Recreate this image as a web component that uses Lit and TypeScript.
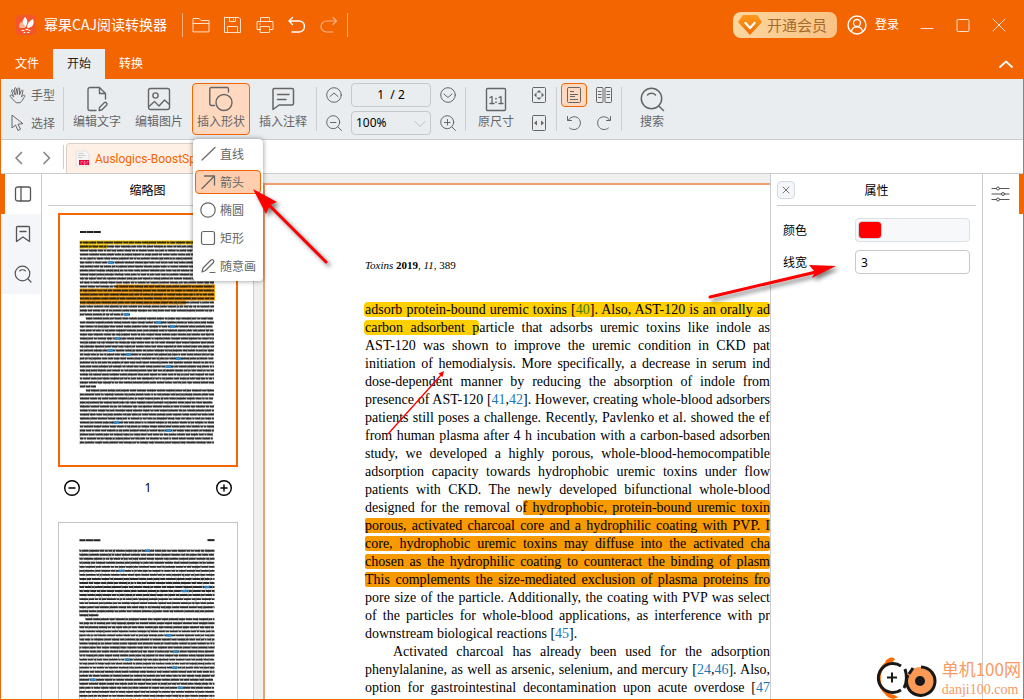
import { LitElement, html, css, svg, nothing, TemplateResult, SVGTemplateResult } from "lit";
import { customElement, property } from "lit/decorators.js";
import { classMap } from "lit/directives/class-map.js";

/* ---------- icons, drawn on the pixel grid of their own size ---------- */

const icon = (w: number, h: number, body: SVGTemplateResult) =>
  html`<svg width=${w} height=${h} viewBox="0 0 ${w} ${h}" fill="none" stroke="currentColor" stroke-linecap="round" stroke-linejoin="round" aria-hidden="true">${body}</svg>`;

const icons = {
  logo: icon(20, 20, svg`<rect width="20" height="20" rx="4" fill="#f4562b" stroke="none"/>
    <path d="M9 2 C12 5 12 8 9.500 12 C6 11 5 7 9 2 Z" fill="#fff" stroke="none"/>
    <path d="M17 4 C19 9 16 13 11 13 C11 9 13 6 17 4 Z" fill="#fff" stroke="none"/>
    <path d="M5 7 C3 9 2.500 12 4 13 H9 C9 10 7 8 5 7 Z" fill="#ffb896" stroke="none"/>
    <path d="M6 15.500 h2 M10 14.500 h2 M13 15.500 h1 M8 17.500 h1 M11.500 17.500 h1.500" stroke="#fff"/>`),
  open: icon(20, 20, svg`<path d="M2 16.500 V3.500 H8 L10 5.500 H18 V16.500 Z M2 8.500 H18"/>`),
  save: icon(20, 20, svg`<path d="M2.500 2.500 H16 L17.500 4 V17.500 H1.500 V2.500 Z M6.500 2.500 V6.500 H12.500 V2.500 M10.500 4 V5 M4.500 17.500 V11.500 H14.500 V17.500"/>`),
  print: icon(20, 20, svg`<path d="M5.500 6.500 V2.500 H14.500 V6.500 M5.500 14.500 H2 V6.500 H18 V14.500 H14.500 M5.500 11.500 H14.500 V17.500 H5.500 Z M4.500 9 H5.500"/>`),
  undo: icon(20, 20, svg`<path d="M5.500 2.500 L2 6 L5.500 9.500 M2.500 6 H12 A5.500 5.500 0 0 1 12 17 H5" stroke-width="1.400"/>`),
  redo: icon(20, 20, svg`<path d="M14 2.500 L17.500 6 L14 9.500 M17 6 H7.500 A5.500 5.500 0 0 0 7.500 17 H14" stroke-width="1.200"/>`),
  gem: icon(24, 20, svg`<defs><linearGradient id="g" x1="0" y1="0" x2="0" y2="1"><stop offset="0" stop-color="#ff9a1a"/><stop offset="1" stop-color="#f46a00"/></linearGradient></defs>
    <path d="M5 0 H19 L24 7 L12 20 L0 7 Z" fill="url(#g)" stroke="none"/><path d="M7.500 8 L12 13 L16.500 8" stroke="#fff" stroke-width="2.400"/>`),
  user: icon(20, 20, svg`<circle cx="10" cy="10" r="9" stroke-width="1.400"/><circle cx="10" cy="8" r="3.500" stroke-width="1.300"/><path d="M4.500 16.500 C5 13 7.500 11.800 10 11.800 C12.500 11.800 15 13 15.500 16.500" stroke-width="1.300"/>`),
  min: icon(14, 14, svg`<path d="M1 10.500 H13"/>`),
  max: icon(14, 14, svg`<rect x="1" y="1.500" width="12" height="12" rx="1"/>`),
  close: icon(14, 14, svg`<path d="M1 1 L13 13 M13 1 L1 13"/>`),
  chevUp: icon(14, 8, svg`<path d="M1 7 L7 1.500 L13 7" stroke-width="1.700"/>`),
  hand: icon(18, 18, svg`<path d="M7 16.500 C4.500 14.500 3 12.500 1.300 10.300 C0.700 9.200 2 8.400 3 9.300 L4.800 11 L2.600 5 C2.300 3.800 3.800 3.200 4.300 4.400 L6.300 9 L5.600 2.800 C5.500 1.500 7.200 1.300 7.400 2.600 L8.300 8.500 L9 2.600 C9.200 1.400 10.800 1.600 10.700 2.900 L10.500 8.800 L12.300 4.600 C12.900 3.500 14.200 4.100 13.900 5.200 L12.600 10.800 C13.500 10 14.500 9 15.300 9.200 C16.200 9.600 15.800 10.500 15.200 11.300 C13.800 13.300 13 15.500 11.500 16.500 Z"/>`),
  cursor: icon(18, 18, svg`<path d="M3 1.500 V14 L6.500 11 L9 16.500 L11.500 15.300 L9 10.200 L13.500 9.700 Z"/>`),
  editText: icon(24, 26, svg`<path d="M11 24.500 H5 A2 2 0 0 1 3 22.500 V3.500 A2 2 0 0 1 5 1.500 H14.500 L20.500 7.500 V13 M14.500 1.500 V7.500 H20.500 M14.500 21.500 L19.500 16.500 C20.500 15.600 22.800 17.500 21.800 19 L17 23.800 L14.200 24.500 Z" stroke-width="1.400"/>`),
  editImage: icon(24, 26, svg`<rect x="1.500" y="2.500" width="21" height="21" rx="2" stroke-width="1.400"/><circle cx="8.500" cy="9.500" r="2.600" stroke-width="1.400"/><path d="M2 20.500 L7.500 15.500 L12 20 L17.500 14 L22.500 18.500" stroke-width="1.400"/>`),
  shapes: icon(24, 26, svg`<path d="M5.500 19.500 H2.500 A2 2 0 0 1 0.800 18 V3 A1.500 1.500 0 0 1 2.500 1.500 H18 A1.500 1.500 0 0 1 19.500 3 V6" stroke-width="1.400"/><circle cx="15" cy="16.500" r="8" stroke-width="1.400"/>`),
  note: icon(24, 26, svg`<path d="M3 2.500 H21 A1.500 1.500 0 0 1 22.500 4 V17.500 A1.500 1.500 0 0 1 21 19 H8 L2 23.500 V4 A1.500 1.500 0 0 1 3 2.500 Z M6.500 8.500 H18 M6.500 13.500 H15" stroke-width="1.500"/>`),
  up: icon(16, 16, svg`<circle cx="8" cy="8" r="7.300"/><path d="M4 9.500 L8 6 L12 9.500"/>`),
  down: icon(16, 16, svg`<circle cx="8" cy="8" r="7.300"/><path d="M4 7 L8 10.500 L12 7"/>`),
  zoomOut: icon(16, 16, svg`<circle cx="7.200" cy="7.200" r="6.500"/><path d="M4.500 7.500 H10 M12 12 L15.500 15.500"/>`),
  zoomIn: icon(16, 16, svg`<circle cx="7.200" cy="7.200" r="6.500"/><path d="M4.500 7.500 H10 M7.500 4.500 V10 M12 12 L15.500 15.500"/>`),
  ratio: icon(22, 26, svg`<rect x="1.500" y="2.500" width="19" height="22" rx="1" stroke-width="1.400"/><path d="M5 11.500 L7 10.500 V17 M5 17.500 H9 M14 11.500 L16 10.500 V17 M14 17.500 H18" stroke-width="1.300"/><path d="M11 12.500 V13 M11 16 V16.500" stroke-width="1.500"/>`),
  fitPage: icon(16, 16, svg`<rect x="1.500" y="0.500" width="13" height="15" rx="1"/><g fill="currentColor" stroke="none"><path d="M8 3 L10.500 5.500 H5.500 Z"/><path d="M8 13 L10.500 10.500 H5.500 Z"/><path d="M3 8 L5.500 5.500 V10.500 Z"/><path d="M13 8 L10.500 5.500 V10.500 Z"/></g>`),
  fitWidth: icon(16, 16, svg`<rect x="1.500" y="0.500" width="13" height="15" rx="1"/><g fill="currentColor" stroke="none"><path d="M3 8 L6 5.500 V10.500 Z"/><path d="M13 8 L10 5.500 V10.500 Z"/></g>`),
  single: icon(16, 16, svg`<rect x="1.500" y="0.500" width="13" height="15" rx="1"/><path d="M4 4.500 H8 M4 7.500 H12 M4 9.500 H9 M4 12.500 H12" stroke-linecap="butt"/>`),
  double: icon(18, 16, svg`<rect x="1.500" y="0.500" width="6.500" height="15" rx="1"/><rect x="10" y="0.500" width="6.500" height="15" rx="1"/><path d="M3 4.500 H6.500 M3 7.500 H6.500 M3 10.500 H6.500 M11.500 4.500 H15 M11.500 7.500 H15 M11.500 10.500 H15" stroke-linecap="butt"/>`),
  rotL: icon(16, 16, svg`<path d="M1.500 1.500 V5.500 H5.500 M2 5.500 C5 0.500 11 0.800 13.500 4.500 C16 9 13 14.500 8 14.500 C6 14.500 4.500 14 3.500 13"/>`),
  rotR: icon(16, 16, svg`<path d="M14.500 1.500 V5.500 H10.500 M14 5.500 C11 0.500 5 0.800 2.500 4.500 C0 9 3 14.500 8 14.500 C10 14.500 11.500 14 12.500 13"/>`),
  search: icon(26, 26, svg`<circle cx="12.500" cy="12.500" r="10.200" stroke-width="1.500"/><path d="M19.800 20 L24.500 24.500 M8.500 9 C10.500 6.800 14.500 6.800 16.500 9" stroke-width="1.500"/>`),
  back: icon(10, 14, svg`<path d="M7.500 1.500 L2 7 L7.500 12.500" stroke-width="1.700"/>`),
  fwd: icon(10, 14, svg`<path d="M2 1.500 L7.500 7 L2 12.500" stroke-width="1.700"/>`),
  pdf: icon(16, 18, svg`<path d="M1.500 1 H11 L14 4 V16 H1.500 Z" fill="#f4f4f4" stroke="#e2e2e2"/><path d="M3.500 3.500 H8 M3.500 5.500 H10 M3.500 7.500 H7" stroke="#d0d0d0"/><rect x="4" y="10" width="10" height="5" fill="#e8003c" stroke="none"/><path d="M6 14 V11.500 H7.500 M9 14 V11.500 H10 V14 Z M12 14 V11.500 H13" stroke="#ffb0c0" stroke-width=".6"/>`),
  panel: icon(18, 18, svg`<rect x="1.500" y="2" width="15" height="14" rx="2" stroke-width="1.300"/><path d="M7 2 V16" stroke-width="1.300"/>`),
  bookmark: icon(18, 18, svg`<path d="M2.500 16.500 V2.500 A1 1 0 0 1 3.500 1.500 H14.500 A1 1 0 0 1 15.500 2.500 V16.500 L9 12 Z M6 6.500 H12" stroke-width="1.300"/>`),
  find: icon(18, 18, svg`<circle cx="8.500" cy="8.500" r="7.300" stroke-width="1.200"/><path d="M14 14 L17 17 M5.800 5.800 C7.300 4.400 9.800 4.400 11.300 5.800" stroke-width="1.200"/>`),
  minus: icon(18, 18, svg`<circle cx="9" cy="9" r="7.300" stroke-width="1.400"/><path d="M6 9 H12" stroke-width="1.400"/>`),
  plus: icon(18, 18, svg`<circle cx="9" cy="9" r="7.300" stroke-width="1.400"/><path d="M6 9 H12 M9 6 V12" stroke-width="1.400"/>`),
  line: icon(16, 16, svg`<path d="M2 14 L15 1.500" stroke-width="1.200"/>`),
  arrow: icon(16, 16, svg`<path d="M2 14.500 L14.500 2 M4.500 2 H14.500 V11" stroke-width="1.300"/>`),
  ellipse: icon(16, 16, svg`<circle cx="8" cy="8" r="7.200" stroke-width="1.200"/>`),
  rect: icon(16, 16, svg`<rect x="1.500" y="1.500" width="13" height="13" rx="2" stroke-width="1.200"/>`),
  pen: icon(16, 16, svg`<path d="M2 14 L3 10 L11 2 C12.500 0.800 14.800 2.800 13.500 4.500 L5.500 12.500 Z M10 14.500 H15" stroke-width="1.200"/>`),
  cross: icon(8, 8, svg`<path d="M1 1 L7 7 M7 1 L1 7"/>`),
  sliders: icon(20, 16, svg`<path d="M1 2.500 H5.500 M8.500 2.500 H18 M1 8 H10.500 M13.500 8 H18 M1 13.500 H5.500 M8.500 13.500 H18" stroke-width="1.200"/><circle cx="7" cy="2.500" r="1.500"/><circle cx="12" cy="8" r="1.500"/><circle cx="7" cy="13.500" r="1.500"/>`),
};

/* ---------- page miniature ---------- */

interface Mini {
  lines: number;
  first: number;
  shortEnds: Record<number, number>;
  rightHead: boolean;
  marks: { line: number; from: number; to: number; color: string }[];
  refs: [number, number][];
}

@customElement("page-thumb")
class PageThumb extends LitElement {
  @property({ attribute: false }) mini!: Mini;
  @property({ type: Boolean, reflect: true }) current = false;

  static styles = css`
    :host { display: block; box-sizing: border-box; background: #fff; border: 1px solid #c4c4c4; height: 254px; }
    :host([current]) { border: 2px solid #f26500; }
    svg { display: block; width: 100%; height: 100%; }
  `;

  private words() {
    const m = this.mini;
    let seed = m.lines * 7 + m.first;
    const rnd = () => (seed = (seed * 16807 + 11) % 2147483647) / 2147483647;
    let body = "";
    let ticks = "";
    for (let i = 0; i < m.lines; i++) {
      const y = m.first + i * 4;
      const end = m.shortEnds[i] ?? 156;
      let x = m.shortEnds[i - 1] !== undefined ? 28 : 22;
      while (x < end - 1) {
        const w = Math.min(2 + rnd() * 8, end - x);
        body += `M${x.toFixed(1)} ${y}h${w.toFixed(1)}`;
        for (let t = x; t < x + w; t += 1.5 + rnd() * 3) ticks += `M${t.toFixed(1)} ${y - 1.6}v${rnd() > 0.7 ? 3.4 : 1.6}`;
        x += w + 0.6;
      }
    }
    return { body, ticks };
  }

  render() {
    const m = this.mini;
    const { body, ticks } = this.words();
    return html`<svg viewBox="2 2 176 250" role="img" aria-label="页面缩略图">
      ${m.marks.map((k) => svg`<rect x=${k.from} y=${m.first + k.line * 4 - 2} width=${k.to - k.from} height="4" fill=${k.color}/>`)}
      <path d="M22 ${m.first - 10.500} h6 m.4 0 h7 m.4 0 h7" stroke="#222" stroke-width="2"/>
      ${m.rightHead ? svg`<path d="M149 ${m.first - 10.500} h7" stroke="#222" stroke-width="2"/>` : nothing}
      <path d=${body} stroke="#111" stroke-opacity=".88" stroke-width="1.900"/>
      <path d=${ticks} stroke="#333" stroke-opacity=".5" stroke-width=".8"/>
      ${m.refs.map(([l, x]) => svg`<rect x=${x} y=${m.first + l * 4 - 1.200} width="5" height="2.400" fill="#2a86c8"/>`)}
    </svg>`;
  }
}

const mini1: Mini = {
  lines: 51, first: 29.5, shortEnds: { 18: 72, 36: 38 }, rightHead: false,
  marks: [
    { line: 0, from: 22, to: 157, color: "#ffcf00" }, { line: 1, from: 22, to: 49, color: "#ffcf00" },
    { line: 11, from: 58, to: 157, color: "#f79a00" }, { line: 12, from: 22, to: 157, color: "#f79a00" },
    { line: 13, from: 22, to: 157, color: "#f79a00" }, { line: 14, from: 22, to: 157, color: "#f79a00" },
    { line: 15, from: 22, to: 128, color: "#f79a00" },
  ],
  refs: [[5, 50], [18, 66], [20, 98], [21, 112], [24, 57], [27, 50], [28, 68], [29, 118], [31, 108], [45, 56], [47, 108]],
};
const mini2: Mini = {
  lines: 56, first: 29.5, shortEnds: { 16: 42 }, rightHead: true,
  marks: [],
  refs: [[0, 87], [5, 61], [9, 146], [10, 124], [21, 108], [25, 115], [27, 67], [29, 114], [32, 33], [34, 120]],
};

/* ---------- document text ---------- */

const ref = (t: string) => html`<a class="ref" href="#${t}">${t}</a>`;
const y = (t: unknown) => html`<mark class="y">${t}</mark>`;
const o = (t: unknown) => html`<mark class="o">${t}</mark>`;

const docLines: { t: unknown; kind?: string }[] = [
  { t: y(html`adsorb protein-bound uremic toxins [${ref("40")}]. Also, AST-120 is an orally ad`) },
  { t: html`${y("carbon adsorbent p")}article that adsorbs uremic toxins like indole as` },
  { t: "AST-120 was shown to improve the uremic condition in CKD pat" },
  { t: "initiation of hemodialysis. More specifically, a decrease in serum ind" },
  { t: "dose-dependent manner by reducing the absorption of indole from" },
  { t: html`presence of AST-120 [${ref("41")},${ref("42")}]. However, creating whole-blood adsorbers` },
  { t: "patients still poses a challenge. Recently, Pavlenko et al. showed the ef" },
  { t: "from human plasma after 4 h incubation with a carbon-based adsorben" },
  { t: "study, we developed a highly porous, whole-blood-hemocompatible" },
  { t: "adsorption capacity towards hydrophobic uremic toxins under flow" },
  { t: "patients with CKD. The newly developed bifunctional whole-blood" },
  { t: html`designed for the removal o${o("f hydrophobic, protein-bound uremic toxin")}` },
  { t: o("porous, activated charcoal core and a hydrophilic coating with PVP. I") },
  { t: o("core, hydrophobic uremic toxins may diffuse into the activated cha") },
  { t: o("chosen as the hydrophilic coating to counteract the binding of plasm") },
  { t: o("This complements the size-mediated exclusion of plasma proteins fro") },
  { t: "pore size of the particle. Additionally, the coating with PVP was select" },
  { t: "of the particles for whole-blood applications, as interference with pr" },
  { t: html`downstream biological reactions [${ref("45")}].`, kind: "last" },
  { t: "Activated charcoal has already been used for the adsorption", kind: "indent" },
  { t: html`phenylalanine, as well as arsenic, selenium, and mercury [${ref("24")},${ref("46")}]. Also,` },
  { t: html`option for gastrointestinal decontamination upon acute overdose [${ref("47")}` },
];

/* ---------- application ---------- */

@customElement("app-root")
class AppRoot extends LitElement {
  static styles = css`
    :host {
      display: flex; flex-direction: column; box-sizing: border-box; height: 100vh; position: relative; overflow: hidden;
      border: 1px solid #f26500; border-top: 0; background: #fff; color: #000;
      font: 12px/18px "Noto Sans", "Noto Sans CJK SC", sans-serif;
    }
    *, *::before { box-sizing: border-box; }
    svg { display: block; flex: none; }
    button, input, select { font: inherit; color: inherit; background: none; border: 0; padding: 0; margin: 0; }
    button { display: flex; align-items: center; justify-content: center; white-space: nowrap; }
    .grow { flex: 1; }

    .top { background: #f26500; color: #fff; flex: none; }
    .title { display: flex; align-items: center; height: 49px; padding: 0 6px 0 15px; }
    .name { font-family: "Noto Sans CJK SC", sans-serif; font-size: 14px; line-height: 20px; font-weight: 400; margin: 0 15px 0 8px; padding-bottom: 2px; }
    .bar { width: 1px; height: 24px; background: #f8b27f; flex: none; }
    .quick { display: flex; gap: 12px; padding: 0 8px; }
    .quick button { width: 20px; height: 20px; color: #ffe0c8; }
    .quick .strong { color: #fff; }
    .quick .dim { color: #f9b284; }
    .vip { height: 26px; padding: 0 10px 0 5px; gap: 5px; border-radius: 8px; background: linear-gradient(90deg, #fbd7a0, #f9c283); color: #a86a2c; font: 15px/22px "Noto Sans CJK SC", sans-serif; }
    .login { gap: 8px; margin: 0 10px 0 10px; }
    .win { width: 36px; height: 30px; color: #ffe3cf; }
    .tabs { display: flex; height: 30px; align-items: stretch; padding-right: 10px; }
    .tabs button { width: 52px; }
    .tabs .on { background: #e9edf0; color: #222; }
    .tabs .fold { width: 14px; }

    .tools { display: flex; align-items: center; flex: none; height: 61px; padding: 0 0 1px; background: #e9edf0; border-bottom: 1px solid #ccc; color: #666; font-family: "Noto Sans CJK SC", sans-serif; }
    .sep { width: 1px; height: 44px; margin: 0 4px; background: #cdd0d3; flex: none; }
    .col { display: flex; flex-direction: column; gap: 4px; }
    .mode { height: 24px; gap: 4px; padding: 0 4px 0 8px; }
    .first { width: 58px; }
    .bigs { display: flex; gap: 4px; }
    .big { flex-direction: column; width: 58px; height: 52px; gap: 0; padding-bottom: 2px; border: 1px solid transparent; border-radius: 4px; }
    .big.narrow { width: 52px; }
    .big.on, .sq.on { background: #ffd9bf; border-color: #f26500; }
    .shape { position: relative; z-index: 5; }
    .sq { width: 24px; height: 24px; border: 1px solid transparent; border-radius: 4px; }
    .wide .sq { width: 26px; }
    .grid { display: grid; grid-template-columns: 24px 80px 24px; gap: 4px 5px; padding: 0 1px; }
    .wide { display: grid; grid-template-columns: 26px 26px; gap: 4px; }
    .field { width: 80px; height: 24px; border: 1px solid #c6c9cc; border-radius: 4px; color: #000; font-family: "Noto Sans", sans-serif; }
    .page-no { text-align: center; word-spacing: normal; }
    .zoom { position: relative; display: block; }
    .zoom select { appearance: none; width: 100%; height: 22px; padding: 0 4px; display: block; }
    .zoom svg { position: absolute; right: 4px; top: 8px; color: #bbb; pointer-events: none; }
    .ratio { display: flex; gap: 5px; margin-right: 1px; }

    .menu { position: absolute; left: 1px; top: 56px; width: 70px; padding: 3px 2px; display: flex; flex-direction: column; gap: 4px; background: #fff; border-radius: 4px; box-shadow: 0 0 5px rgba(0, 0, 0, .45); }
    .menu button { height: 24px; gap: 4px; padding: 0 4px; justify-content: flex-start; border: 1px solid transparent; border-radius: 4px; }
    .menu .on { background: #ffceae; border-color: #f26500; }

    .files { display: flex; align-items: flex-end; height: 34px; flex: none; border-bottom: 1px solid #ccc; padding-left: 4px; }
    .nav { width: 28px; height: 31px; color: #888; }
    .files .sep { height: 24px; margin: 0 2px; align-self: center; }
    .file { width: 190px; height: 30px; gap: 4px; padding: 0 8px; justify-content: flex-start; border: 1px solid #ddd0c6; border-bottom: 0; border-radius: 4px 4px 0 0; background: #fff0e5; color: #f26500; font-family: Roboto, sans-serif; }

    .main { flex: 1; display: flex; min-height: 0; }
    .rail { flex: none; width: 41px; border-right: 1px solid #ccc; }
    .rail button { width: 40px; height: 40px; background: #f4f6f9; color: #555; padding-left: 4px; }
    .rail .on { background: #fff; border-left: 4px solid #f26500; padding: 0; }
    .rail.right { border: 0; border-left: 1px solid #ccc; }
    .rail.right .on { border: 0; border-right: 4px solid #f26500; width: 100%; }
    .thumbs { flex: none; width: 212px; border-right: 1px solid #ccc; padding: 0 6px; overflow: hidden; }
    .head { height: 32px; margin: 0; border-bottom: 1px solid #ccc; display: flex; align-items: center; justify-content: center; font-size: 12px; font-weight: 400; font-family: "Noto Sans CJK SC", sans-serif; }
    .stack { padding: 7px 9px 0 10px; }
    .pager { display: flex; justify-content: space-between; align-items: center; height: 42px; margin-bottom: 13px; padding: 0 5px; }

    .doc { flex: 1; min-width: 0; background: #f0f0f0; padding: 9px 0 0 9px; overflow: hidden; }
    .page { position: relative; min-height: 100%; background: #fff; border: solid #eea070; border-width: 2px 0 0 2px; padding: 71px 0 0 100px; overflow: hidden; font-family: "Liberation Serif", serif; font-size: 14px; line-height: 18px; }
    .running { margin: 0 0 27px; font-size: 11px; }
    .ln { margin: 0; text-align: justify; text-align-last: justify; height: 18px; white-space: nowrap; }
    .ln.last { text-align-last: left; }
    .ln.indent { padding-left: 28px; }
    mark { color: inherit; }
    .y { background: #ffcf00; border-radius: 4px; padding-left: 1px; margin-left: -1px; }
    .o { background: #f79a00; border-radius: 2px; }
    .ref { color: #1a78b8; text-decoration: none; }
    .y .ref { color: #3f7a00; }
    .drawn { position: absolute; left: 122px; top: 184px; }

    .props { flex: none; width: 212px; border-left: 1px solid #ccc; padding: 0 6px; }
    .props h2 { flex: 1; margin: 0 18px 0 0; text-align: center; font: inherit; }
    .x { width: 18px; height: 18px; border: 1px solid #d3dae0; border-radius: 4px; background: #f4f6f9; color: #777; }
    .rows { display: flex; flex-direction: column; gap: 8px; padding: 12px 6px; }
    .row { display: flex; align-items: center; justify-content: space-between; font-family: "Noto Sans CJK SC", sans-serif; }
    .box { width: 115px; height: 24px; border: 1px solid #c6c9cc; border-radius: 4px; padding: 0 5px; font-family: "Noto Sans", sans-serif; }
    .box.tint { background: #f6f8fa; border-color: #dbe1e6; padding: 0 2px; display: flex; align-items: center; }
    .box input { width: 24px; height: 18px; border-radius: 4px; border: 1px solid #cfd6db; overflow: hidden; }
    input[type="color"]::-webkit-color-swatch-wrapper { padding: 0; }
    input[type="color"]::-webkit-color-swatch { border: 0; }

    .pointer { position: absolute; z-index: 8; pointer-events: none; filter: drop-shadow(3px 3px 2px rgba(0, 0, 0, .5)); overflow: visible; }
    .p1 { left: 252px; top: 189px; }
    .p2 { left: 707px; top: 264px; }
    .brand { position: absolute; right: 2px; bottom: 0; display: flex; align-items: center; gap: 5px; color: #f79a63; z-index: 8; }
    .brand div { display: flex; flex-direction: column; font: 14px/18px "Liberation Serif", serif; }
    .brand .zh { font: 17px/24px "Noto Sans CJK SC", sans-serif; }
  `;

  private big(label: string, i: TemplateResult, cls = "") {
    return html`<button class="big ${cls}">${i}<span>${label}</span></button>`;
  }

  private renderTools() {
    const items: [string, TemplateResult][] = [["直线", icons.line], ["箭头", icons.arrow], ["椭圆", icons.ellipse], ["矩形", icons.rect], ["随意画", icons.pen]];
    return html`<div class="tools" role="toolbar">
      <div class="col first">
        <button class="mode">${icons.hand}<span>手型</span></button>
        <button class="mode">${icons.cursor}<span>选择</span></button>
      </div>
      <span class="sep"></span>
      <div class="bigs">
        ${this.big("编辑文字", icons.editText)} ${this.big("编辑图片", icons.editImage)}
        <div class="shape">
          ${this.big("插入形状", icons.shapes, "on")}
          <div class="menu" role="menu">
            ${items.map(([t, i]) => html`<button role="menuitem" class=${classMap({ on: t === "箭头" })}>${i}<span>${t}</span></button>`)}
          </div>
        </div>
        ${this.big("插入注释", icons.note)}
      </div>
      <span class="sep"></span>
      <div class="grid">
        <button class="sq" aria-label="上一页">${icons.up}</button>
        <input class="field page-no" aria-label="页码" value="1  / 2" />
        <button class="sq" aria-label="下一页">${icons.down}</button>
        <button class="sq" aria-label="缩小">${icons.zoomOut}</button>
        <label class="field zoom"><select aria-label="缩放"><option>100%</option></select>
          ${icon(12, 8, svg`<path d="M1 1.500 L6 6.500 L11 1.500"/>`)}</label>
        <button class="sq" aria-label="放大">${icons.zoomIn}</button>
      </div>
      <span class="sep"></span>
      <div class="ratio">
        ${this.big("原尺寸", icons.ratio, "narrow")}
        <div class="col">
          <button class="sq" aria-label="适合页面">${icons.fitPage}</button>
          <button class="sq" aria-label="适合宽度">${icons.fitWidth}</button>
        </div>
      </div>
      <span class="sep"></span>
      <div class="wide">
        <button class="sq on" aria-label="单页">${icons.single}</button>
        <button class="sq" aria-label="双页">${icons.double}</button>
        <button class="sq" aria-label="左旋">${icons.rotL}</button>
        <button class="sq" aria-label="右旋">${icons.rotR}</button>
      </div>
      <span class="sep"></span>
      ${this.big("搜索", icons.search, "narrow")}
    </div>`;
  }

  render() {
    return html`
      <header class="top">
        <div class="title">
          ${icons.logo}<span class="name">幂果CAJ阅读转换器</span><span class="bar"></span>
          <div class="quick">
            <button aria-label="打开">${icons.open}</button>
            <button aria-label="保存">${icons.save}</button>
            <button aria-label="打印">${icons.print}</button>
            <button class="strong" aria-label="撤销">${icons.undo}</button>
            <button class="dim" aria-label="重做">${icons.redo}</button>
          </div>
          <span class="bar"></span><span class="grow"></span>
          <button class="vip">${icons.gem}<span>开通会员</span></button>
          <button class="login">${icons.user}<span>登录</span></button>
          <button class="win" aria-label="最小化">${icons.min}</button>
          <button class="win" aria-label="最大化">${icons.max}</button>
          <button class="win" aria-label="关闭">${icons.close}</button>
        </div>
        <nav class="tabs">
          <button>文件</button><button class="on">开始</button><button>转换</button>
          <span class="grow"></span><button class="fold" aria-label="收起">${icons.chevUp}</button>
        </nav>
      </header>
      ${this.renderTools()}
      <div class="files">
        <button class="nav" aria-label="后退">${icons.back}</button>
        <button class="nav" aria-label="前进">${icons.fwd}</button>
        <span class="sep"></span>
        <button class="file">${icons.pdf}<span>Auslogics-BoostSp</span></button>
      </div>
      <div class="main">
        <nav class="rail">
          <button class="on" aria-label="缩略图">${icons.panel}</button>
          <button aria-label="书签">${icons.bookmark}</button>
          <button aria-label="查找">${icons.find}</button>
        </nav>
        <aside class="thumbs">
          <h2 class="head">缩略图</h2>
          <div class="stack">
            <page-thumb current .mini=${mini1}></page-thumb>
            <div class="pager">
              <button aria-label="缩小">${icons.minus}</button><span>1</span><button aria-label="放大">${icons.plus}</button>
            </div>
            <page-thumb .mini=${mini2}></page-thumb>
          </div>
        </aside>
        <main class="doc">
          <article class="page">
            <p class="running"><i>Toxins</i> <b>2019</b>, <i>11</i>, 389</p>
            ${docLines.map((l) => html`<p class="ln ${l.kind ?? ""}">${l.t}</p>`)}
            <svg class="drawn" width="60" height="66" viewBox="0 0 60 66"><path d="M1 65 L54 6" stroke="#f00" stroke-width="1.300"/><path d="M57 2 L55.500 8 L51.500 4.500 Z" fill="#f00"/></svg>
          </article>
        </main>
        <aside class="props">
          <div class="head"><button class="x" aria-label="关闭属性">${icons.cross}</button><h2>属性</h2></div>
          <div class="rows">
            <div class="row"><label for="color">颜色</label><span class="box tint"><input id="color" type="color" value="#ff0000" /></span></div>
            <div class="row"><label for="width">线宽</label><input class="box" id="width" value="3" /></div>
          </div>
        </aside>
        <nav class="rail right"><button class="on" aria-label="属性">${icons.sliders}</button></nav>
      </div>
      <svg class="pointer p1" width="76" height="76" viewBox="0 0 76 76"><path d="M14 14 L73 73" stroke="#f00" stroke-width="3" stroke-linecap="round"/><path d="M0 0 L24 13 L17 16 L13 25 Z" fill="#f00"/></svg>
      <svg class="pointer p2" width="130" height="36" viewBox="0 0 130 36"><path d="M2 33 L108 8" stroke="#f00" stroke-width="3" stroke-linecap="round"/><path d="M128 2 L104 14 L107 8 L101 1 Z" fill="#f00"/></svg>
      <div class="brand">
        <svg width="64" height="42" viewBox="0 0 64 42" fill="none">
          <path d="M20 3 A19 19 0 0 0 22 40" stroke="#ff6a00" stroke-width="3"/>
          <path d="M12 5 C15 0 21 -1 22 3 L16 5 Z M12 37 C15 42 22 43 25 40 L16 36 Z" fill="#ff6a00"/>
          <path d="M28 9 A14.500 14.500 0 1 0 28 33" stroke="#181818" stroke-width="3"/>
          <path d="M14 20.500 H24 M19 15.500 V25.500" stroke="#181818" stroke-width="2"/>
          <circle cx="47" cy="24" r="14" fill="#fa9a56"/>
          <path d="M32 12 C34 18 34 26 31 31 M36 17 L40 11 M48 10 A14.200 14.200 0 1 1 35 18" stroke="#181818" stroke-width="3"/>
          <circle cx="47" cy="24" r="5" fill="#181818"/>
        </svg>
        <div><span class="zh">单机100网</span><span>danji100.com</span></div>
      </div>
    `;
  }
}
